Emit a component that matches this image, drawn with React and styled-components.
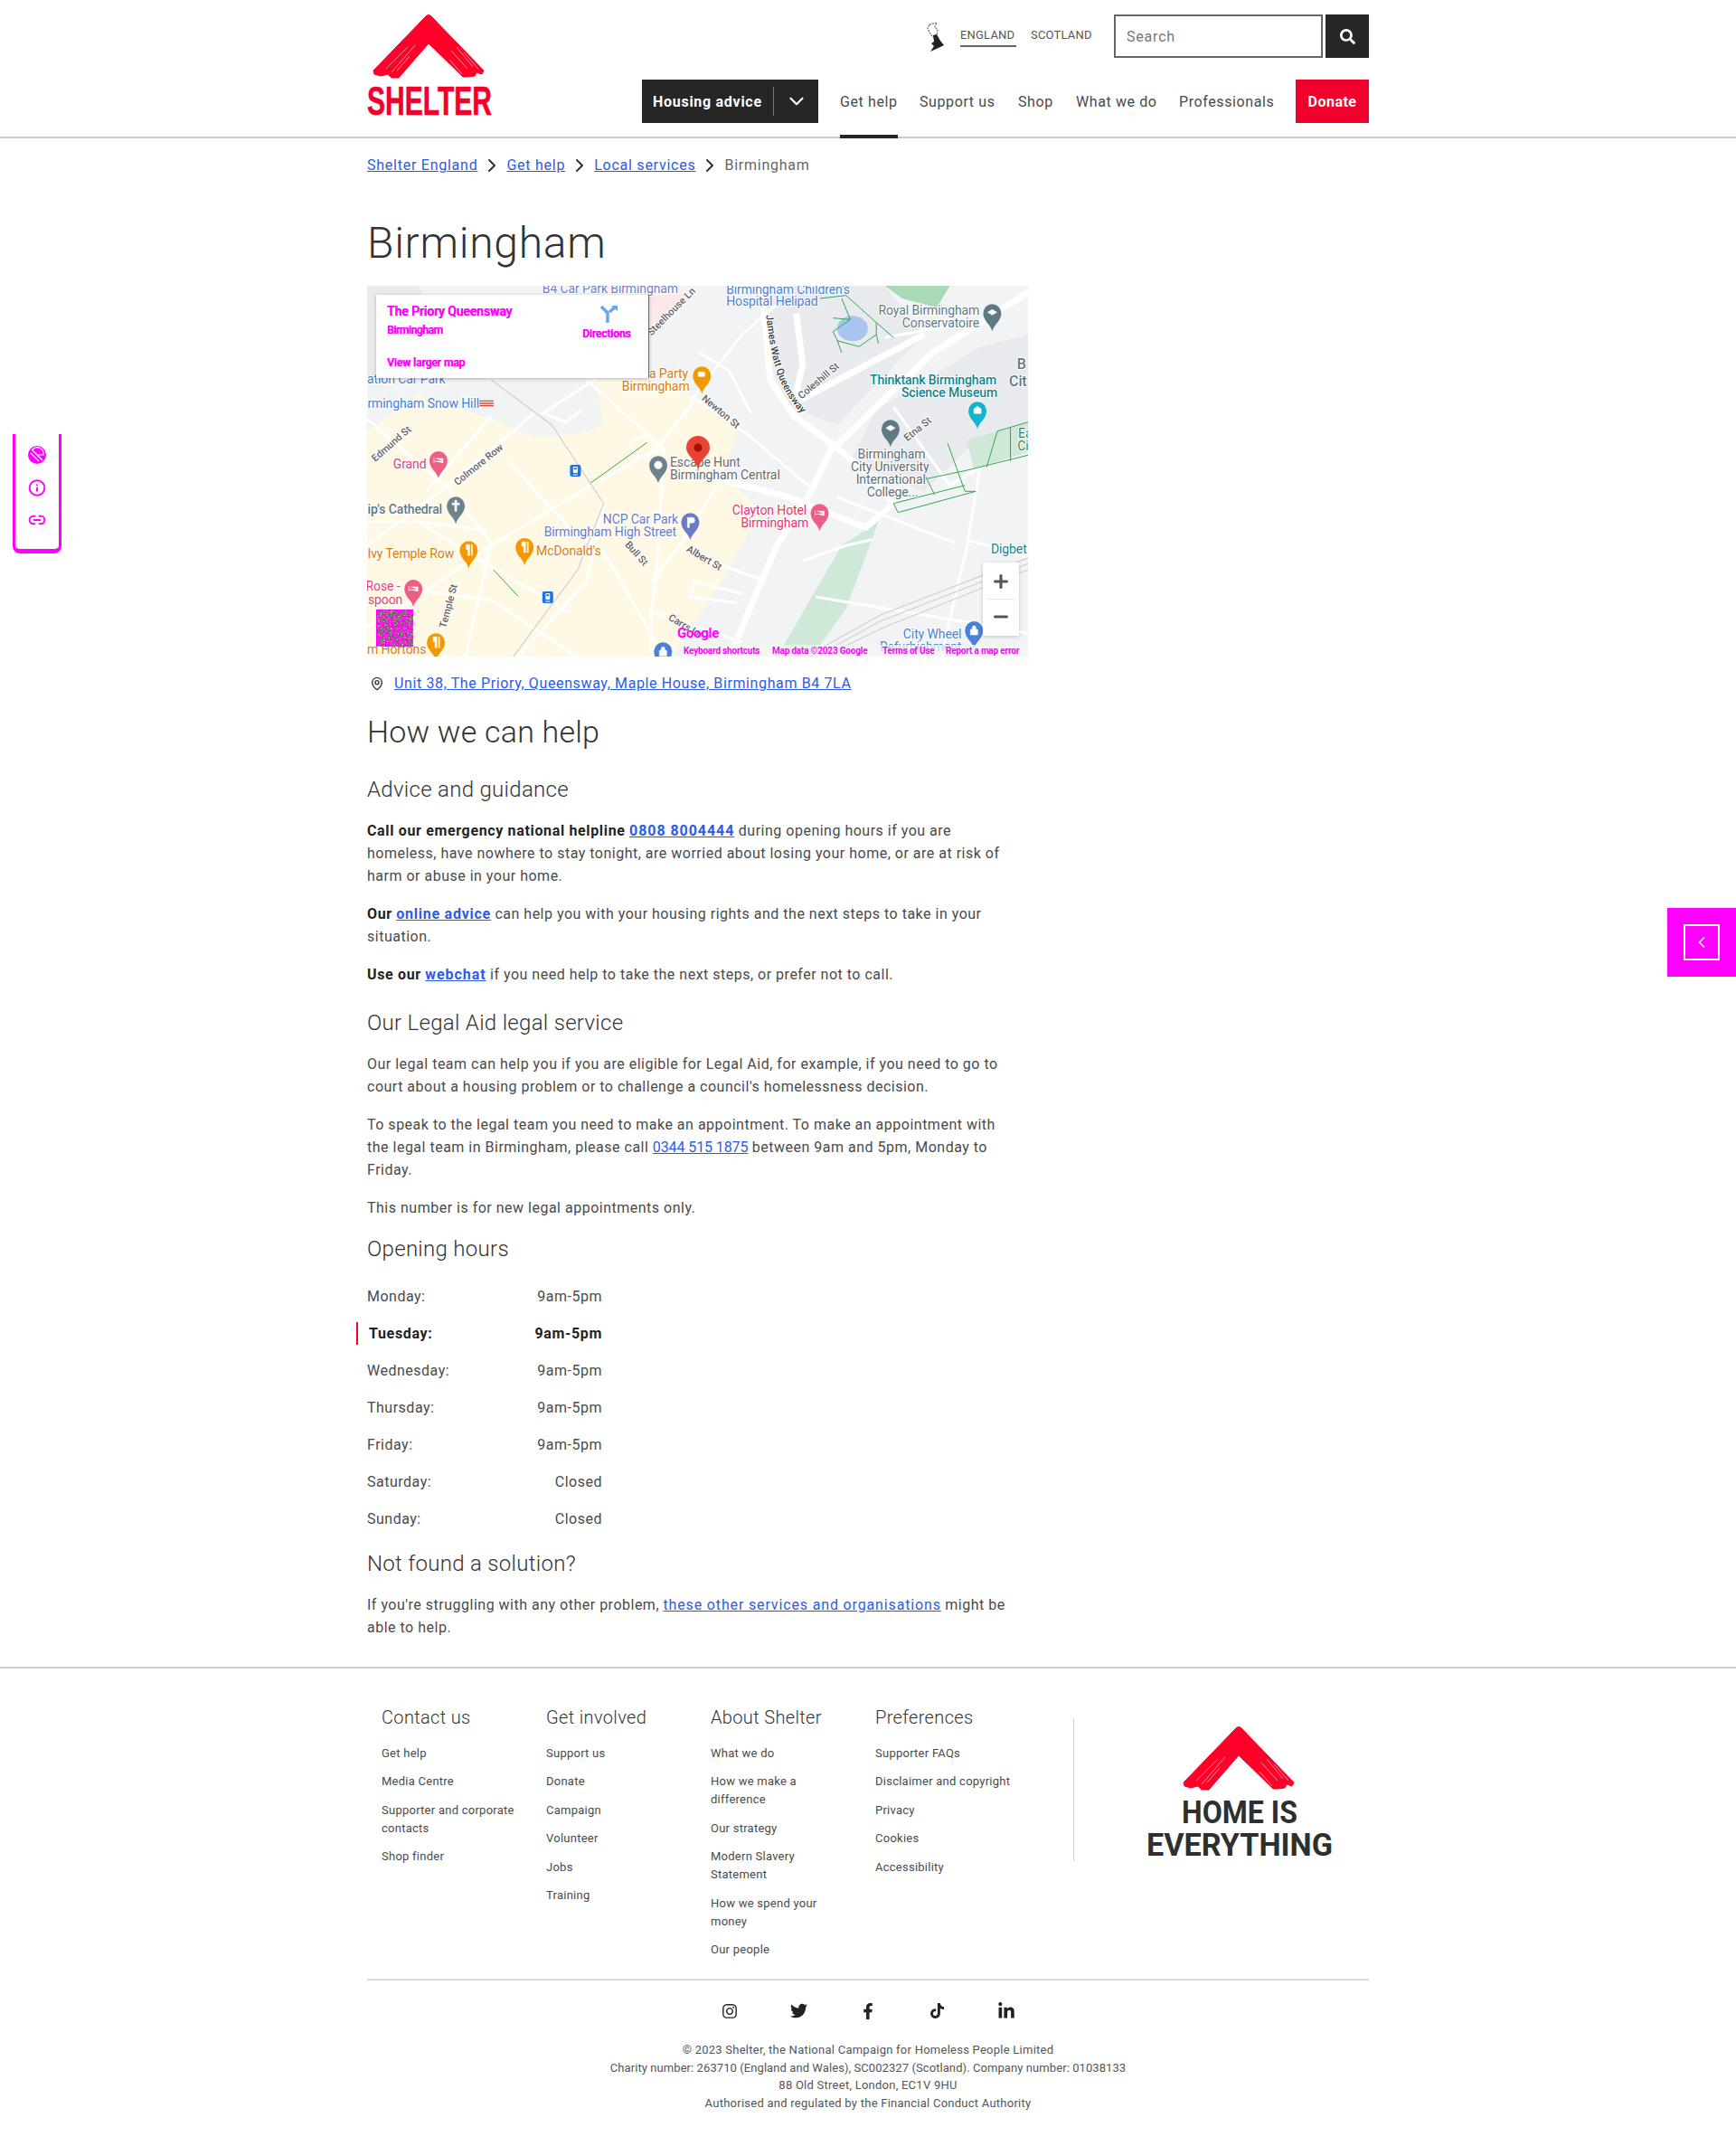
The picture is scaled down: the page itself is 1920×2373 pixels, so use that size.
import React from "react";
import styled, { createGlobalStyle } from "styled-components";
import { ChevronDown, ChevronRight, ChevronLeft, MapPin, Plus, Minus, Info, Link2 } from "lucide-react";
import { FaSearch, FaInstagram, FaTwitter, FaFacebookF, FaTiktok, FaLinkedinIn } from "react-icons/fa";

const Global = createGlobalStyle`
  html, body { margin: 0; padding: 0; background: #fff; }
  body { font-family: Roboto, "Liberation Sans", sans-serif; color: #4a4a4a; font-size: 16px; }
  * { box-sizing: border-box; }
`;

const BLUE = "#2b5be8";
const MAGENTA = "#ff00ff";
const RED = "#f0002a";

const Page = styled.div`position: relative; width: 1920px; height: 2373px; overflow: hidden;`;
const Wrap = styled.div`width: 1108px; margin: 0 auto;`;

const Header = styled.header`height: 153px; border-bottom: 2px solid #ccc;`;
const HeaderInner = styled(Wrap)`display: flex; justify-content: space-between; padding-top: 16px; height: 151px;`;
const LogoBox = styled.a`display: block; width: 138px; height: 116px;`;
const HeaderRight = styled.div`display: flex; flex-direction: column; align-items: flex-end; gap: 24px;`;
const TopRow = styled.div`display: flex; align-items: flex-start; height: 48px;`;
const Country = styled.a`
  font-size: 13px; letter-spacing: 0.2px; color: #555; text-transform: uppercase; line-height: 16px;
  padding: 15px 0 3px; margin-left: ${p => p.$ml}px; width: ${p => p.$w}px; white-space: nowrap;
  border-bottom: 2px solid ${p => (p.$active ? "#666" : "transparent")};
`;
const SearchInput = styled.div`
  width: 231px; height: 48px; border: 2px solid #666; margin-left: 24px; padding-left: 12px;
  display: flex; align-items: center; font-size: 16px; color: #777; letter-spacing: 0.8px;
`;
const SearchButton = styled.div`
  width: 48px; height: 48px; margin-left: 3px; background: #262626; color: #fff;
  display: flex; align-items: center; justify-content: center;
`;
const NavRow = styled.nav`display: flex; align-items: flex-start; height: 65px;`;
const HousingButton = styled.a`
  width: 195px; height: 48px; background: #262626; color: #fff; font-weight: 700; font-size: 16px;
  display: flex; align-items: center; padding-left: 12px; letter-spacing: 0.72px; white-space: nowrap; margin-right: 24px;
`;
const HousingDivider = styled.span`width: 1px; height: 32px; background: #777; margin-left: 12px; margin-right: 12px; flex: none;`;
const NavLink = styled.a`
  height: 65px; margin-right: 24px; padding-top: 13px; font-size: 16px; line-height: 24px; color: #4a4a4a;
  letter-spacing: 0.6px; white-space: nowrap; width: ${p => p.$w}px;
  border-bottom: 4px solid ${p => (p.$active ? "#262626" : "transparent")};
`;
const Donate = styled.a`
  width: 81px; height: 48px; background: ${RED}; color: #fff; font-weight: 700; font-size: 16px;
  display: flex; align-items: center; justify-content: center; letter-spacing: 0.5px;
`;

const Breadcrumb = styled.div`
  display: flex; align-items: center; height: 25px; margin-top: 17px; font-size: 16px; letter-spacing: 0.75px;
`;
const Crumb = styled.a`color: ${BLUE}; text-decoration: underline; white-space: nowrap;`;
const CrumbCurrent = styled.span`color: #666;`;
const CrumbSep = styled.span`display: flex; width: 32px; justify-content: center; color: #333;`;

const Main = styled.main`width: 731px;`;
const H1 = styled.h1`
  font-size: 48px; font-weight: 300; line-height: 58px; margin: 45px 0 18px; color: #333; letter-spacing: 0.7px;
`;
const MapFrame = styled.div`position: relative; width: 731px; height: 410px; overflow: hidden; background: #f1f3f4;`;
const MapSvg = styled.svg`display: block; font-family: Roboto, sans-serif;`;
const InfoCard = styled.div`
  position: absolute; left: 10px; top: 10px; width: 302px; height: 92px; background: #fff;
  border-right: 1px solid ${MAGENTA}; box-shadow: 0 1px 4px rgba(0,0,0,.25); color: ${MAGENTA};
`;
const InfoText = styled.div`
  position: absolute; left: ${p => p.$x}px; top: ${p => p.$y}px; font-size: ${p => p.$s}px; font-weight: 500;
  letter-spacing: ${p => p.$ls}px; line-height: 16px; white-space: nowrap; text-shadow: 0.6px 0 ${MAGENTA};
`;
const InfoIcon = styled.svg`position: absolute; left: 247px; top: 12px;`;
const ZoomControl = styled.div`
  position: absolute; left: 681px; top: 306px; width: 40px; height: 81px; background: #fff; color: #555;
  display: flex; flex-direction: column; align-items: center; justify-content: space-between; padding: 10px 0;
  box-shadow: 0 1px 4px rgba(0,0,0,.2);
`;
const ZoomRule = styled.div`width: 30px; height: 1px; background: #e6e6e6;`;
const GoogleMark = styled.div`
  position: absolute; left: 343px; top: 375px; color: ${MAGENTA}; font-weight: 700; font-size: 15px; letter-spacing: -0.3px; line-height: 18px;
`;
const Credits = styled.div`
  position: absolute; right: 0; bottom: 0; width: 386px; height: 13px; padding-left: 5px; background: rgba(245,245,245,.7);
  display: flex; color: ${MAGENTA}; font-size: 10px; font-weight: 700; line-height: 13px; letter-spacing: -0.2px; white-space: nowrap;
`;
const Credit = styled.span`width: ${p => p.$w}px; flex: none;`;
const Thumb = styled.svg`position: absolute; left: 10px; top: 358px;`;

const Address = styled.div`display: flex; align-items: center; height: 25px; margin-top: 17px; color: #333;`;
const AddressIcon = styled.span`display: flex; width: 30px; padding-left: 3px;`;
const AddressLink = styled.a`color: ${BLUE}; text-decoration: underline; letter-spacing: 0.62px; white-space: nowrap;`;
const H2 = styled.h2`font-size: 34px; font-weight: 300; line-height: 44px; margin: 18.5px 0 0; color: #333; letter-spacing: 0.2px;`;
const H3 = styled.h3`
  font-size: 24px; font-weight: 300; line-height: 30px; margin: ${p => p.$top}px 0 18px; color: #333; letter-spacing: 0.3px;
`;
const P = styled.p`margin: 0 0 17px; max-width: 716px; line-height: 25px; font-size: 16px; letter-spacing: 0.5px; color: #4a4a4a;`;
const Strong = styled.strong`color: #222; font-weight: 700; letter-spacing: 0.65px;`;
const Link = styled.a`
  color: ${BLUE}; text-decoration: underline; font-weight: ${p => (p.$bold ? 700 : 400)};
  letter-spacing: ${p => p.$ls}px;
`;

const Hours = styled.div`width: 260px; position: relative; margin-top: -1px;`;
const HourRow = styled.div`
  position: relative; display: flex; justify-content: space-between; align-items: center; height: 41.15px;
  letter-spacing: ${p => (p.$today ? 0.65 : 0.5)}px;
  font-weight: ${p => (p.$today ? 700 : 400)}; color: ${p => (p.$today ? "#222" : "#4a4a4a")}; padding-left: ${p => (p.$today ? 2 : 0)}px;
  ${p => p.$today && `&::before { content: ""; position: absolute; left: -12px; top: 8px; width: 2px; height: 25px; background: ${RED}; }`}
`;

const Footer = styled.footer`border-top: 2px solid #ccc; margin-top: 31px;`;
const FooterTop = styled.div`display: flex; padding: 40px 0 23px 16px; border-bottom: 2px solid #ddd; height: 345px;`;
const FooterCol = styled.div`width: 182px; display: flex; flex-direction: column; gap: 11.5px;`;
const FooterHead = styled.div`font-size: 20px; font-weight: 300; line-height: 28px; color: #333; margin-bottom: 4.5px; letter-spacing: 0.35px; white-space: nowrap;`;
const FooterLink = styled.a`font-size: 13px; line-height: 20px; color: #4a4a4a; width: ${p => p.$w}px; letter-spacing: 0.25px;`;
const FooterBrand = styled.div`
  margin: 16px 0 0 37px; height: 157px; border-left: 1px solid #ccc; padding: 8px 0 0 80px; flex: none;
`;
const Social = styled.div`display: flex; justify-content: center; gap: 56.5px; margin-top: 24px; color: #222;`;
const SocialIcon = styled.span`display: flex; width: 20px; height: 20px; justify-content: center; align-items: center;`;
const Legal = styled.div`margin-top: 23px; text-align: center; font-size: 13px; line-height: 19.7px; color: #555; letter-spacing: 0.25px;`;
const LegalNarrow = styled.span`letter-spacing: 0.08px;`;

const SideWidget = styled.div`
  position: absolute; left: 14px; top: 480px; width: 54px; height: 132px;
  border: 3px solid ${MAGENTA}; border-top: none; border-bottom-width: 5px; border-radius: 0 0 8px 8px;
  display: flex; flex-direction: column; align-items: center; color: ${MAGENTA}; padding-top: 13px; gap: 16px;
`;
const SideIcon = styled.span`display: flex; width: 20px; height: 20px; align-items: center; justify-content: center;`;
const Tab = styled.div`
  position: absolute; right: 0; top: 1004px; width: 76px; height: 76px; background: ${MAGENTA};
  display: flex; align-items: center; justify-content: center;
`;
const TabBox = styled.div`width: 40px; height: 40px; border: 2px solid #fff; color: #fff; display: flex; align-items: center; justify-content: center;`;

function RoofShape() {
  return (
    <>
      <path d="M61 0 L64 2 L122 62 L120 66 L114 64 L112 68 L104 69 L99 69 L61 32 L28 70 L20 70 L16 66 L8 68 L1 66 L0 62 L58 2 Z" fill="#ff0028" stroke="#ff0028" strokeLinejoin="round" />
      <path d="M14 60 L38 36 M20 64 L46 34 M26 62 L40 46 M104 60 L86 40 M110 58 L92 36 M98 66 L84 50 M116 60 L100 42" stroke="#fff" strokeWidth=".7" opacity=".8" />
    </>
  );
}

function Logo() {
  return (
    <LogoBox>
      <svg width="138" height="116" viewBox="0 0 138 116" style={{ display: "block" }}>
        <g transform="translate(7 0)"><RoofShape /></g>
        <text x="0" y="111" textLength="138" lengthAdjust="spacingAndGlyphs" fontFamily="Liberation Sans, sans-serif" fontWeight="700" fontSize="44" fill="#f0002a" stroke="#f0002a" strokeWidth=".6">SHELTER</text>
      </svg>
    </LogoBox>
  );
}

function BrandMark() {
  return (
    <svg width="206" height="146" viewBox="0 0 206 146" style={{ display: "block" }}>
      <g transform="translate(41 0)"><RoofShape /></g>
      <text x="39" y="107" textLength="128" lengthAdjust="spacingAndGlyphs" fontFamily="Roboto, sans-serif" fontWeight="700" fontSize="35" fill="#2f2f2f">HOME IS</text>
      <text x="0" y="143" textLength="206" lengthAdjust="spacingAndGlyphs" fontFamily="Roboto, sans-serif" fontWeight="700" fontSize="35" fill="#2f2f2f">EVERYTHING</text>
    </svg>
  );
}

function UkIcon() {
  return (
    <svg width="24" height="34" viewBox="0 0 24 34" style={{ marginRight: 15, marginTop: 8 }}>
      <path d="M5 3 L13 1 L11 6 L14 9 L13 15 L9 17 L5 12 L3 7 Z" fill="none" stroke="#777" strokeWidth="1.3" strokeDasharray="2 1" />
      <path d="M9 15 L13 14 L17 21 L21 26 L17 28 L6 33 L10 27 L7 24 L10 22 Z" fill="#222" />
    </svg>
  );
}

const mx = x => (x - 13) / 2.09;
const my = y => (y - 18) / 3;
const pts = a => a.map(([x, y]) => `${mx(x).toFixed(1)},${my(y).toFixed(1)}`).join(" ");

const areas = [
  ["#e8eaed", [[930, 18], [1210, 18], [1300, 180], [1100, 480], [990, 420], [950, 300]]],
  ["#e8eaed", [[1190, 430], [1430, 220], [1541, 180], [1541, 470], [1400, 560], [1300, 700], [1130, 600]]],
  ["#fef8e5", [[13, 500], [130, 380], [300, 460], [400, 520], [500, 510], [560, 480], [540, 330], [660, 330], [770, 385], [870, 500], [835, 640], [925, 770], [885, 860], [830, 1000], [720, 1250], [13, 1250]]],
  ["#fce8e6", [[660, 48], [770, 48], [700, 140], [660, 140]]],
  ["#a8dab5", [[1210, 18], [1360, 18], [1330, 90], [1250, 60]]],
  ["#cfe8d8", [[1400, 530], [1470, 500], [1541, 470], [1541, 570], [1415, 625]]],
  ["#cfe8d8", [[1110, 880], [1195, 800], [1120, 1090], [1040, 1250], [960, 1250]]],
  ["#e8eaed", [[13, 18], [130, 18], [290, 330], [13, 330]]],
];
const roadsThick = [
  [[930, 90], [945, 330], [1000, 450], [1090, 545], [1040, 700], [960, 880], [850, 1250]],
  [[1541, 40], [1320, 240], [1100, 545]],
  [[1090, 545], [1170, 640], [1230, 740], [1165, 820], [990, 720], [830, 660]],
  [[1005, 110], [1020, 280], [1000, 400]],
  [[1010, 400], [1300, 180]],
];
const roadsThin = [
  [[13, 460], [200, 690], [300, 870], [240, 1250]],
  [[400, 440], [200, 680], [13, 880]],
  [[770, 400], [680, 560], [530, 680], [300, 880], [100, 1080], [13, 1150]],
  [[770, 390], [900, 520], [1040, 690]],
  [[520, 330], [700, 560], [680, 1000], [670, 1090], [670, 1250]],
  [[960, 80], [880, 180], [760, 400]],
  [[830, 660], [750, 850], [670, 1000]],
  [[800, 930], [920, 990]],
  [[340, 600], [480, 820], [560, 900], [700, 1250]],
  [[13, 1010], [300, 1060], [500, 1250]],
  [[670, 1100], [880, 1200]],
  [[1430, 620], [1400, 880], [1340, 1250]],
  [[1400, 860], [1541, 920]],
  [[1050, 1050], [1341, 1120], [1541, 1170]],
  [[900, 440], [850, 300], [780, 240]],
  [[560, 740], [520, 1000], [360, 1250]],
  [[620, 540], [640, 590], [700, 560], [660, 510], [620, 540]],
  [[130, 800], [300, 950], [480, 1100]],
  [[13, 800], [130, 800], [290, 830]],
  [[300, 450], [150, 700]],
  [[1230, 420], [1360, 680], [1430, 620]],
  [[1210, 190], [1440, 130]],
  [[1020, 930], [1120, 880], [1180, 860]],
  [[1370, 870], [1100, 720]],
  [[540, 330], [420, 440], [470, 470], [510, 430]],
  [[880, 1040], [770, 1000], [760, 1050], [870, 1070]],
];
const rails = [
  [[300, 330], [440, 480], [560, 740], [500, 960], [350, 1250]],
  [[1541, 920], [1200, 1110], [1050, 1230]],
  [[1541, 940], [1200, 1130], [1060, 1240]],
  [[1541, 960], [1210, 1150], [1080, 1240]],
];
const greens = [
  [[1060, 60], [1120, 50], [1190, 140], [1230, 190]],
  [[1110, 60], [1130, 130], [1090, 170], [1100, 200], [1150, 220], [1190, 180], [1190, 140]],
  [[1090, 125], [1130, 130]],
  [[1100, 200], [1110, 240]], [[1190, 180], [1195, 210]],
  [[660, 538], [530, 672]],
  [[305, 960], [362, 1048]],
  [[1541, 470], [1470, 500], [1445, 620]],
  [[1500, 490], [1500, 600]],
  [[1541, 580], [1400, 630], [1300, 660]],
  [[1355, 540], [1395, 700], [1420, 700], [1240, 770], [1230, 740], [1395, 680]],
  [[1300, 640], [1325, 712]],
];
const labels = [
  ["B4 Car Park Birmingham", 418, 28, "#6f80c8"],
  ["Birmingham Children's", 843, 30, "#4a80d8"],
  ["Hospital Helipad", 843, 70, "#4a80d8"],
  ["Royal Birmingham", 1195, 100, "#5f7a85"],
  ["Conservatoire", 1250, 142, "#5f7a85"],
  ["a Party", 665, 308, "#d97c0a"],
  ["Birmingham", 602, 350, "#d97c0a"],
  ["Thinktank Birmingham", 1175, 330, "#12858f", 500],
  ["Science Museum", 1248, 373, "#12858f", 500],
  ["B", 1515, 280, "#5f7a85", 500, 16],
  ["Cit", 1497, 335, "#5f7a85", 500, 16],
  ["rmingham Snow Hill", 14, 408, "#3f7fd8"],
  ["Grand", 73, 610, "#e0436e"],
  ["Escape Hunt", 713, 604, "#5f6d75"],
  ["Birmingham Central", 713, 646, "#5f6d75"],
  ["Birmingham", 1147, 577, "#5f6d75"],
  ["City University", 1131, 619, "#5f6d75"],
  ["International", 1143, 661, "#5f6d75"],
  ["College...", 1168, 703, "#5f6d75"],
  ["ip's Cathedral", 14, 760, "#5f7a85", 500],
  ["NCP Car Park", 558, 793, "#6a7bc8"],
  ["Birmingham High Street", 422, 835, "#6a7bc8"],
  ["Clayton Hotel", 857, 763, "#e8346e"],
  ["Birmingham", 877, 805, "#e8346e"],
  ["Ivy Temple Row", 14, 907, "#d97c0a"],
  ["McDonald's", 404, 898, "#d97c0a"],
  ["Rose -", 10, 1015, "#e0436e"],
  ["spoon", 15, 1058, "#e0436e"],
  ["m Hortons", 13, 1225, "#d97c0a"],
  ["Digbet", 1455, 892, "#12858f"],
  ["City Wheel", 1252, 1173, "#4a80d8"],
  ["Refurbishment", 1198, 1215, "#4a80d8"],
  ["Ea", 1518, 508, "#1f8a5f"],
  ["Ci", 1516, 548, "#1f8a5f"],
  ["ation Car Park", 13, 326, "#4a80d8"],
];
const streets = [
  ["Newton St", 785, 395, 40],
  ["Edmund St", 32, 603, -41],
  ["Colmore Row", 222, 682, -39],
  ["Steelhouse Ln", 670, 185, -45],
  ["Coleshill St", 1017, 395, -40],
  ["Etna St", 1262, 535, -39],
  ["Albert St", 750, 897, 31],
  ["Bull St", 608, 878, 48],
  ["Temple St", 195, 1155, -75],
  ["Carrs Ln", 708, 1125, 30],
];
const BED = "M-5 -3 V3 M-5 1 H5 V3 M-3 -2 H5 V1";
const CAP = "M-5 -1 L0 -4 L5 -1 L0 2 Z";
const FORK = "M-3 -6 V-1 H-1 V6 H1 V-6 Z M3 -6 V6 H4 V-6 Z";
const BAG = "M-4 -1 H4 V5 H-4 Z M-2 -1 V-3 A2 2 0 0 1 2 -3 V-1";
const pins = [
  [1458, 118, "#5f7a85", CAP],
  [787, 325, "#f29900", "M-4 -4 H3 V1 H-4 Z"],
  [1424, 442, "#12b5cb", "M-4 3 V-2 L0 -5 L4 -2 V3 Z"],
  [1223, 502, "#5f7a85", CAP],
  [178, 606, "#ec5f85", BED],
  [686, 622, "#6d848f", "M-3 -3 A4 4 0 1 0 3 3 A4 4 0 1 0 -3 -3"],
  [218, 757, "#6d848f", "M-1 -6 H1 V6 H-1 Z M-4 -3 H4 V-1 H-4 Z"],
  [760, 811, "#6a7bc8", "M-3 -5 H2 A3 3 0 0 1 2 1 H-1 V6 H-3 Z"],
  [1059, 781, "#ec5f85", BED],
  [248, 904, "#f29900", FORK],
  [377, 894, "#f29900", FORK],
  [120, 1032, "#ec5f85", BED],
  [172, 1210, "#f29900", FORK],
  [1416, 1170, "#4a80d8", BAG],
  [697, 1240, "#4a80d8", BAG],
];

function Pin({ x, y, color, d }) {
  return (
    <g transform={`translate(${mx(x).toFixed(1)} ${my(y).toFixed(1)})`}>
      <path d="M0 17 C-2 9 -10 6 -10 -3 A10 10 0 0 1 10 -3 C10 6 2 9 0 17 Z" fill={color} />
      <path d={d} transform="translate(0 -3)" fill="#fff" stroke="#fff" strokeWidth=".6" />
    </g>
  );
}

function TramStop({ x, y }) {
  return (
    <g transform={`translate(${mx(x).toFixed(1)} ${my(y).toFixed(1)})`}>
      <rect width="12" height="13" rx="2" fill="#1a73e8" />
      <rect x="3.5" y="2" width="5" height="7" rx="1" fill="#fff" />
      <rect x="4.5" y="3.2" width="3" height="2" fill="#1a73e8" />
      <path d="M3.5 11 H8.5" stroke="#fff" strokeWidth="1" />
    </g>
  );
}

function Noise() {
  const cells = [];
  let seed = 12345;
  for (let j = 0; j < 40; j++) {
    for (let i = 0; i < 40; i++) {
      seed = (seed * 1103515245 + 12345) & 0x7fffffff;
      const v = (seed >> 16) % 10;
      cells.push(<rect key={`${i}-${j}`} x={i} y={j} width="1" height="1" fill={v < 6 ? "#f010e0" : v < 8 ? "#7f8f6a" : v === 8 ? "#4f6a58" : "#a8a890"} />);
    }
  }
  return (
    <Thumb width="41" height="41" viewBox="-0.5 -0.5 41 41" shapeRendering="crispEdges">
      {cells}
      <rect x="-.5" y="-.5" width="41" height="41" fill="none" stroke={MAGENTA} />
    </Thumb>
  );
}

function MapView() {
  return (
    <MapFrame>
      <MapSvg width="731" height="410" viewBox="0 0 731 410">
        {areas.map(([c, a], i) => <polygon key={i} points={pts(a)} fill={c} />)}
        <ellipse cx={mx(1135)} cy={my(160)} rx="17" ry="14" fill="#a9c4f0" />
        {roadsThin.map((r, i) => <polyline key={i} points={pts(r)} fill="none" stroke="#fff" strokeWidth="3" />)}
        {roadsThick.map((r, i) => <polyline key={i} points={pts(r)} fill="none" stroke="#fff" strokeWidth="7" strokeLinejoin="round" />)}
        {rails.map((r, i) => <polyline key={i} points={pts(r)} fill="none" stroke="#cdd0d4" strokeWidth="1.2" />)}
        {greens.map((r, i) => <polyline key={i} points={pts(r)} fill="none" stroke="#34a853" strokeWidth="1" />)}
        <TramStop x={482} y={612} />
        <TramStop x={418} y={1032} />
        <path d={`M${mx(272)} ${my(400)} h16 M${mx(272)} ${my(408)} h16 M${mx(272)} ${my(416)} h16`} stroke="#ea4335" strokeWidth="1.4" />
        <g letterSpacing="-0.1">
          {labels.map(([t, x, y, c, w, s], i) => (
            <text key={i} x={mx(x)} y={my(y) + 5} fill={c} fontWeight={w || 400} fontSize={s || 14} stroke="#fff" strokeWidth="2" paintOrder="stroke">{t}</text>
          ))}
        </g>
        <g fontSize="11" fontWeight="500" fill="#5f6368">
          {streets.map(([t, x, y, a], i) => (
            <text key={i} transform={`translate(${mx(x).toFixed(1)} ${my(y).toFixed(1)}) rotate(${a})`} stroke="#fff" strokeWidth="2" paintOrder="stroke">{t}</text>
          ))}
          <path id="jwq" d={`M${mx(935)} ${my(115)} C${mx(950)} ${my(300)} ${mx(970)} ${my(380)} ${mx(1040)} ${my(475)}`} fill="none" />
          <text stroke="#fff" strokeWidth="2" paintOrder="stroke" fill="#3c4043"><textPath href="#jwq">James Watt Queensway</textPath></text>
        </g>
        {pins.map(([x, y, c, d], i) => <Pin key={i} x={x} y={y} color={c} d={d} />)}
        <g transform={`translate(${mx(778).toFixed(1)} ${my(516).toFixed(1)})`}>
          <path d="M0 37 C-2 26 -13 22 -13 13 A13 13 0 0 1 13 13 C13 22 2 26 0 37 Z" fill="#ea4335" />
          <circle cy="13" r="4.5" fill="#a50e0e" />
        </g>
      </MapSvg>
      <InfoCard>
        <InfoText $x={12} $y={10} $s={14} $ls={-0.1}>The Priory Queensway</InfoText>
        <InfoText $x={12} $y={31} $s={12} $ls={-0.4}>Birmingham</InfoText>
        <InfoText $x={228} $y={35} $s={12} $ls={-0.1}>Directions</InfoText>
        <InfoText $x={12} $y={67} $s={12} $ls={-0.05}>View larger map</InfoText>
        <InfoIcon width="20" height="20" viewBox="0 0 20 20">
          <path d="M2 1 L9 8 V19 M18 1 L11 7" fill="none" stroke="#6da4ec" strokeWidth="3.5" />
          <path d="M13 0 H20 V6 Z" fill="#6da4ec" />
        </InfoIcon>
      </InfoCard>
      <Noise />
      <GoogleMark>Google</GoogleMark>
      <ZoomControl>
        <Plus size={22} strokeWidth={3.4} />
        <ZoomRule />
        <Minus size={22} strokeWidth={3.4} />
      </ZoomControl>
      <Credits>
        <Credit $w={98}>Keyboard shortcuts</Credit>
        <Credit $w={122}>Map data ©2023 Google</Credit>
        <Credit $w={70}>Terms of Use</Credit>
        <Credit $w={90}>Report a map error</Credit>
      </Credits>
    </MapFrame>
  );
}

const hours = [
  ["Monday:", "9am-5pm"], ["Tuesday:", "9am-5pm", true], ["Wednesday:", "9am-5pm"], ["Thursday:", "9am-5pm"],
  ["Friday:", "9am-5pm"], ["Saturday:", "Closed"], ["Sunday:", "Closed"],
];
const footerCols = [
  ["Contact us", 165, ["Get help", "Media Centre", "Supporter and corporate contacts", "Shop finder"]],
  ["Get involved", 165, ["Support us", "Donate", "Campaign", "Volunteer", "Jobs", "Training"]],
  ["About Shelter", 125, ["What we do", "How we make a difference", "Our strategy", "Modern Slavery Statement", "How we spend your money", "Our people"]],
  ["Preferences", 165, ["Supporter FAQs", "Disclaimer and copyright", "Privacy", "Cookies", "Accessibility"]],
];

export default function App() {
  return (
    <Page>
      <Global />
      <Header>
        <HeaderInner>
          <Logo />
          <HeaderRight>
            <TopRow>
              <UkIcon />
              <Country $active $w={62}>England</Country>
              <Country $ml={16} $w={68}>Scotland</Country>
              <SearchInput>Search</SearchInput>
              <SearchButton><FaSearch size={17} /></SearchButton>
            </TopRow>
            <NavRow>
              <HousingButton>Housing advice<HousingDivider /><ChevronDown size={26} strokeWidth={2} /></HousingButton>
              <NavLink $active $w={64}>Get help</NavLink>
              <NavLink $w={85}>Support us</NavLink>
              <NavLink $w={40}>Shop</NavLink>
              <NavLink $w={90}>What we do</NavLink>
              <NavLink $w={105}>Professionals</NavLink>
              <Donate>Donate</Donate>
            </NavRow>
          </HeaderRight>
        </HeaderInner>
      </Header>
      <Wrap>
        <Breadcrumb>
          <Crumb>Shelter England</Crumb>
          <CrumbSep><ChevronRight size={24} strokeWidth={2} /></CrumbSep>
          <Crumb>Get help</Crumb>
          <CrumbSep><ChevronRight size={24} strokeWidth={2} /></CrumbSep>
          <Crumb>Local services</Crumb>
          <CrumbSep><ChevronRight size={24} strokeWidth={2} /></CrumbSep>
          <CrumbCurrent>Birmingham</CrumbCurrent>
        </Breadcrumb>
        <Main>
          <H1>Birmingham</H1>
          <MapView />
          <Address>
            <AddressIcon><MapPin size={16} strokeWidth={2} /></AddressIcon>
            <AddressLink>Unit 38, The Priory, Queensway, Maple House, Birmingham B4 7LA</AddressLink>
          </Address>
          <H2>How we can help</H2>
          <H3 $top={27.5}>Advice and guidance</H3>
          <P><Strong>Call our emergency national helpline</Strong> <Link $bold $ls={0.95}>0808 8004444</Link> during opening hours if you are homeless, have nowhere to stay tonight, are worried about losing your home, or are at risk of harm or abuse in your home.</P>
          <P><Strong>Our</Strong> <Link $bold $ls={0.75}>online advice</Link> can help you with your housing rights and the next steps to take in your situation.</P>
          <P><Strong>Use our</Strong> <Link $bold $ls={0.95}>webchat</Link> if you need help to take the next steps, or prefer not to call.</P>
          <H3 $top={26}>Our Legal Aid legal service</H3>
          <P>Our legal team can help you if you are eligible for Legal Aid, for example, if you need to go to court about a housing problem or to challenge a council's homelessness decision.</P>
          <P>To speak to the legal team you need to make an appointment. To make an appointment with the legal team in Birmingham, please call <Link $ls={-0.1}>0344 515 1875</Link> between 9am and 5pm, Monday to Friday.</P>
          <P>This number is for new legal appointments only.</P>
          <H3 $top={17.5}>Opening hours</H3>
          <Hours>
            {hours.map(([d, t, today]) => (
              <HourRow key={d} $today={today}><span>{d}</span><span>{t}</span></HourRow>
            ))}
          </Hours>
          <H3 $top={13.5}>Not found a solution?</H3>
          <P>If you're struggling with any other problem, <Link $ls={0.85}>these other services and organisations</Link> might be able to help.</P>
        </Main>
      </Wrap>
      <Footer>
        <Wrap>
          <FooterTop>
            {footerCols.map(([head, w, links]) => (
              <FooterCol key={head}>
                <FooterHead>{head}</FooterHead>
                {links.map(l => <FooterLink key={l} $w={w}>{l}</FooterLink>)}
              </FooterCol>
            ))}
            <FooterBrand><BrandMark /></FooterBrand>
          </FooterTop>
          <Social>
            <SocialIcon><FaInstagram size={18} /></SocialIcon>
            <SocialIcon><FaTwitter size={19} /></SocialIcon>
            <SocialIcon><FaFacebookF size={18} /></SocialIcon>
            <SocialIcon><FaTiktok size={17} /></SocialIcon>
            <SocialIcon><FaLinkedinIn size={20} /></SocialIcon>
          </Social>
          <Legal>
            © 2023 Shelter, the National Campaign for Homeless People Limited<br />
            <LegalNarrow>Charity number: 263710 (England and Wales), SC002327 (Scotland). Company number: 01038133</LegalNarrow><br />
            88 Old Street, London, EC1V 9HU<br />
            Authorised and regulated by the Financial Conduct Authority
          </Legal>
        </Wrap>
      </Footer>
      <SideWidget>
        <SideIcon>
          <svg width="20" height="20" viewBox="0 0 20 20">
            <circle cx="10" cy="10" r="10" fill={MAGENTA} />
            <path d="M3 8 L12 17 M4 4 L16 16" stroke="#fff" strokeWidth="1.2" />
            <path d="M11 10 H17 A7 7 0 0 0 5 4" fill="none" stroke="#fff" strokeWidth="1.2" />
          </svg>
        </SideIcon>
        <SideIcon><Info size={21} strokeWidth={2.4} /></SideIcon>
        <SideIcon><Link2 size={22} strokeWidth={2.4} /></SideIcon>
      </SideWidget>
      <Tab><TabBox><ChevronLeft size={20} strokeWidth={2} /></TabBox></Tab>
    </Page>
  );
}
